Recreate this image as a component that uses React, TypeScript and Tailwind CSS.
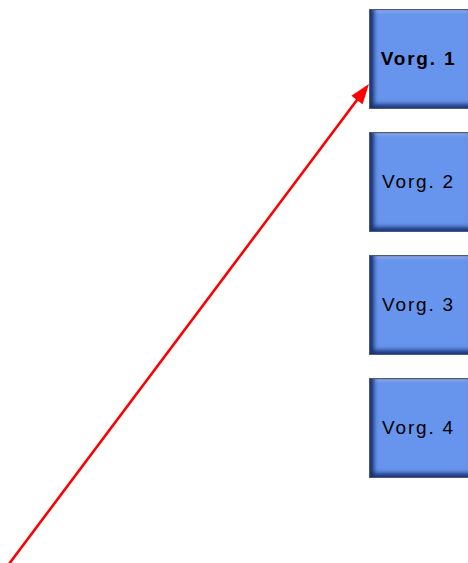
const BUTTONS = [
  { label: "Vorg. 1", active: true },
  { label: "Vorg. 2", active: false },
  { label: "Vorg. 3", active: false },
  { label: "Vorg. 4", active: false },
];

function VorgButton({ label, active }: { label: string; active: boolean }) {
  return (
    <button
      className={`flex h-[100px] w-[100px] items-center justify-center border-b border-l border-t border-[#4a5a7a] bg-[#6794ec] pr-[2px] text-[19px] text-black shadow-[inset_5px_0_4px_-1px_#1c3270,inset_0_-5px_4px_-1px_#1f3a80,inset_0_3px_3px_-1px_#a6c0f7,inset_-2px_0_2px_-1px_#a6c0f7] ${
        active ? "font-bold tracking-[1.8px]" : "tracking-[1.8px]"
      }`}
      style={{ fontFamily: '"Liberation Sans", Arial, sans-serif' }}
    >
      {label}
    </button>
  );
}

export default function App() {
  return (
    <div className="relative h-[563px] w-[468px] overflow-hidden bg-white">
      <div className="ml-[369px] flex flex-col gap-[23px] pt-[9px]">
        {BUTTONS.map((b) => (
          <VorgButton key={b.label} label={b.label} active={b.active} />
        ))}
      </div>

      {/* pointer arrow */}
      <svg className="absolute left-0 top-0" width="468" height="563" viewBox="0 0 468 563">
        <line x1="9" y1="564" x2="360" y2="96" stroke="#ff0000" strokeWidth="2.6" />
        <polygon points="369,84 362.6,104.2 351.4,95.8" fill="#ff0000" />
      </svg>
    </div>
  );
}
